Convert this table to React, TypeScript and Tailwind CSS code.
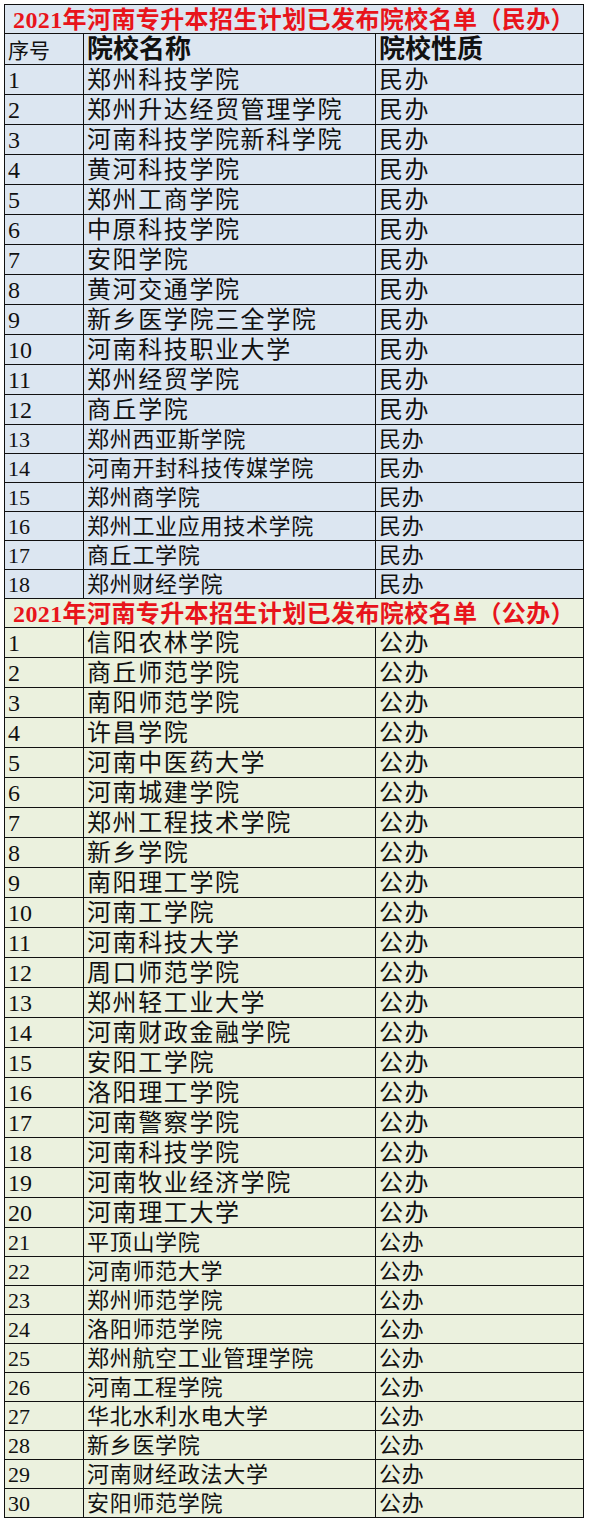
const privateSchools = [
  "郑州科技学院",
  "郑州升达经贸管理学院",
  "河南科技学院新科学院",
  "黄河科技学院",
  "郑州工商学院",
  "中原科技学院",
  "安阳学院",
  "黄河交通学院",
  "新乡医学院三全学院",
  "河南科技职业大学",
  "郑州经贸学院",
  "商丘学院",
  "郑州西亚斯学院",
  "河南开封科技传媒学院",
  "郑州商学院",
  "郑州工业应用技术学院",
  "商丘工学院",
  "郑州财经学院",
];

const publicSchools = [
  "信阳农林学院",
  "商丘师范学院",
  "南阳师范学院",
  "许昌学院",
  "河南中医药大学",
  "河南城建学院",
  "郑州工程技术学院",
  "新乡学院",
  "南阳理工学院",
  "河南工学院",
  "河南科技大学",
  "周口师范学院",
  "郑州轻工业大学",
  "河南财政金融学院",
  "安阳工学院",
  "洛阳理工学院",
  "河南警察学院",
  "河南科技学院",
  "河南牧业经济学院",
  "河南理工大学",
  "平顶山学院",
  "河南师范大学",
  "郑州师范学院",
  "洛阳师范学院",
  "郑州航空工业管理学院",
  "河南工程学院",
  "华北水利水电大学",
  "新乡医学院",
  "河南财经政法大学",
  "安阳师范学院",
];

const font = { fontFamily: '"Liberation Serif", "Noto Sans CJK SC", serif' };

const Row = ({
  no,
  name,
  kind,
  big,
  bg,
}: {
  no: number;
  name: string;
  kind: string;
  big: boolean;
  bg: string;
}) => (
  <div
    className={`flex border-b border-[#111] text-[#111] ${bg} ${
      big ? "h-[30px] text-[24px]" : "h-[29px] text-[22px]"
    }`}
  >
    <div className="w-[79px] border-r border-[#111] flex items-end pl-[3px] leading-none pb-[2px]">
      {no}
    </div>
    <div
      className={`w-[292px] border-r border-[#111] flex items-end pl-[3px] leading-none pb-[2px] whitespace-nowrap ${
        big ? "tracking-[1.6px]" : "tracking-[0.7px]"
      }`}
    >
      {name}
    </div>
    <div
      className={`w-[207px] flex items-end pl-[3px] leading-none pb-[2px] ${
        big ? "tracking-[1.6px]" : "tracking-[0.7px]"
      }`}
    >
      {kind}
    </div>
  </div>
);

const Title = ({ text, bg }: { text: string; bg: string }) => (
  <div
    className={`h-[29px] border-b border-[#111] flex items-end justify-center pb-[1px] text-[24px] tracking-[0.4px] leading-none font-bold text-[#e8141b] whitespace-nowrap ${bg}`}
  >
    {text}
  </div>
);

export default function App() {
  return (
    <div className="w-[591px] h-[1523px] bg-white pt-[4px] pl-[4px]" style={font}>
      <div className="w-[580px] border-t border-l border-r border-[#111]">
        <Title text="2021年河南专升本招生计划已发布院校名单（民办）" bg="bg-[#dce6f1]" />
        <div className="flex h-[31px] border-b border-[#111] bg-[#dce6f1] text-[#111]">
          <div className="w-[79px] border-r border-[#111] flex items-end pl-[3px] pb-[2px] leading-none text-[21px]">
            序号
          </div>
          <div className="w-[292px] border-r border-[#111] flex items-end pl-[3px] pb-[1px] leading-none text-[26px] font-bold">
            院校名称
          </div>
          <div className="w-[207px] flex items-end pl-[3px] pb-[1px] leading-none text-[26px] font-bold">
            院校性质
          </div>
        </div>
        {privateSchools.map((name, i) => (
          <Row key={name} no={i + 1} name={name} kind="民办" big={i < 12} bg="bg-[#dce6f1]" />
        ))}
        <Title text="2021年河南专升本招生计划已发布院校名单（公办）" bg="bg-[#ebf1de]" />
        {publicSchools.map((name, i) => (
          <Row key={name} no={i + 1} name={name} kind="公办" big={i < 20} bg="bg-[#ebf1de]" />
        ))}
      </div>
    </div>
  );
}
